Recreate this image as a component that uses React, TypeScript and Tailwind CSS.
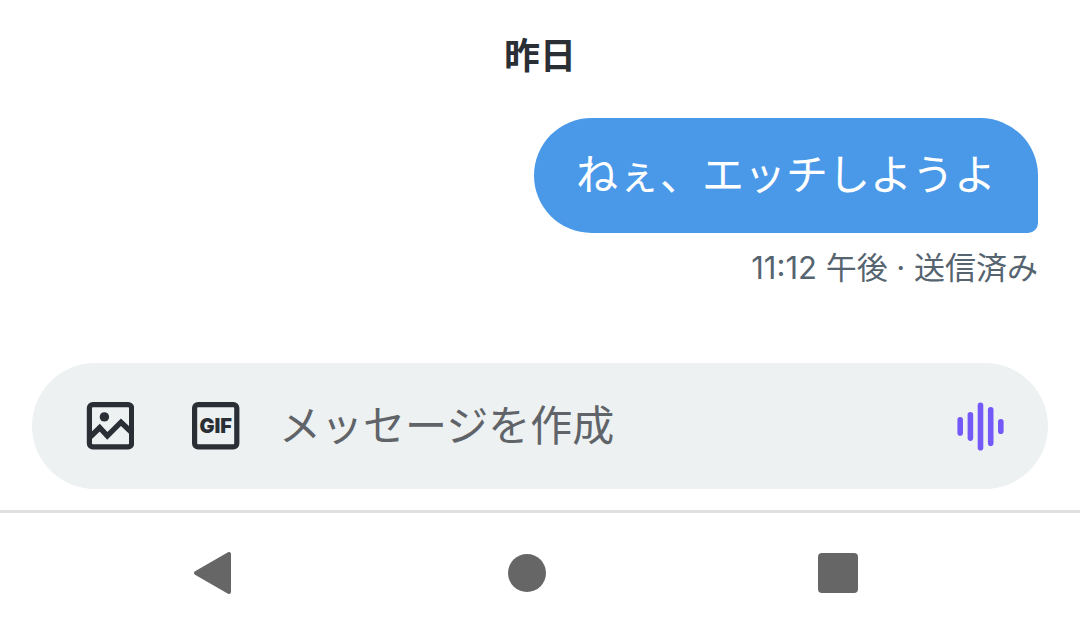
import React from 'react';

function ImageIcon() {
  return (
    <svg viewBox="0 0 48 48" className="size-12" aria-hidden="true">
      <rect x="3.4" y="2.6" width="42.2" height="42.2" rx="3.4" fill="none" stroke="#2a2f36" strokeWidth="5.2" />
      <circle cx="18.4" cy="14.9" r="4.7" fill="#2a2f36" />
      <path d="M3.3 35.8 13.7 25.7l7.6 8.2L35 20.2 46 30.8" fill="none" stroke="#2a2f36" strokeWidth="5.4" />
    </svg>
  );
}

function VoiceIcon() {
  return (
    <svg viewBox="0 0 48 50" className="h-[50px] w-12" aria-hidden="true">
      <g stroke="#7558f8" strokeWidth="5.6" strokeLinecap="round">
        <path d="M4.2 18.9v13M14.4 13.7v23.4M24.5 4.4v42.4M34.7 8.8v33.4M44.8 20.8v9.4" />
      </g>
    </svg>
  );
}

function Message({ text, status }: { text: string; status: string }) {
  return (
    <article className="flex flex-col items-end">
      <p className="rounded-[58px] rounded-br-[10px] bg-[#4a99e9] px-[42px] pt-[27px] pb-[29px] text-[42px] leading-[59px] text-white">
        {text}
      </p>
      <p className="mt-[13px] text-[31px] leading-[44px] text-[#566470]">{status}</p>
    </article>
  );
}

function Composer() {
  return (
    <form
      className="mx-8 mt-[73px] flex h-[126px] items-center rounded-full bg-[#edf1f2] pr-11 pl-[54px]"
      onSubmit={(event) => event.preventDefault()}
    >
      <button type="button" aria-label="画像" className="shrink-0">
        <ImageIcon />
      </button>
      <button
        type="button"
        aria-label="GIF"
        className="ml-[58px] shrink-0"
      >
        <svg viewBox="0 0 48 48" className="size-12" aria-hidden="true">
          <rect x="2.6" y="2.6" width="42.2" height="42.2" rx="3.4" fill="none" stroke="#2a2f36" strokeWidth="5.2" />
          <text x="23.7" y="31" textAnchor="middle" fill="#2a2f36" className="font-['Inter',sans-serif] text-[20px] font-black">
            GIF
          </text>
        </svg>
      </button>
      <input
        type="text"
        aria-label="メッセージを作成"
        placeholder="メッセージを作成"
        className="ml-[39px] h-16 min-w-0 flex-1 bg-transparent pb-0.5 text-[42px] text-[#2a2f36] outline-none placeholder:text-[#606468]"
      />
      <button type="button" aria-label="音声メッセージ" className="shrink-0">
        <VoiceIcon />
      </button>
    </form>
  );
}

function NavigationBar() {
  return (
    <nav className="mt-[21px] border-t-3 border-[#e0e0e0] pr-[222px] pl-[193px]">
      <div className="flex h-[120px] items-center justify-between">
        <button type="button" aria-label="戻る" className="w-[42px]">
          <svg viewBox="0 0 38 44" className="h-11 w-[38px]" aria-hidden="true">
            <path d="M3 22 36 3v38z" fill="#666" stroke="#666" strokeWidth="4" strokeLinejoin="round" />
          </svg>
        </button>
        <button type="button" aria-label="ホーム" className="size-[38px] rounded-full bg-[#666]" />
        <button type="button" aria-label="アプリ履歴" className="size-10 rounded bg-[#666]" />
      </div>
    </nav>
  );
}

export default function App() {
  return (
    <main lang="ja" className="min-h-screen bg-white font-['Inter','Noto_Sans_CJK_JP',sans-serif]">
      <section className="px-[42px] pt-[29px]">
        <h2 className="mb-[35px] text-center text-[36px] leading-[54px] font-bold text-[#2a2f36]">昨日</h2>
        <Message text="ねぇ、エッチしようよ" status="11:12 午後 · 送信済み" />
      </section>
      <Composer />
      <NavigationBar />
    </main>
  );
}
